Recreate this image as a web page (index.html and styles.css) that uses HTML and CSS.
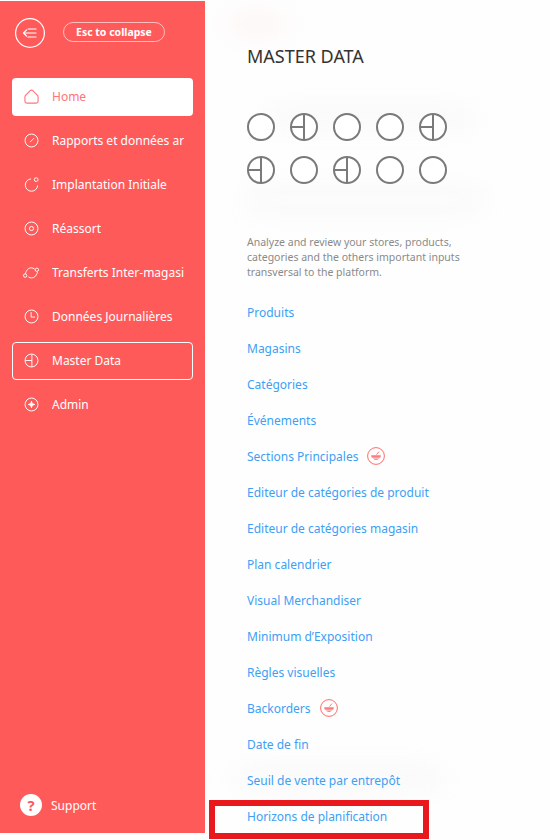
FILE: index.html
```html
<!DOCTYPE html>
<html lang="fr">
<head>
  <meta charset="UTF-8" />
  <meta name="viewport" content="width=device-width, initial-scale=1" />
  <title>Master Data</title>
  <link rel="stylesheet" href="styles.css">
</head>
<body>
  <div class="page">
    <aside class="sidebar">
      <div class="sidebar-top">
        <button class="collapse-btn" aria-label="Collapse">
          <svg width="30" height="30" viewBox="0 0 30 30" fill="none" stroke="#fff" stroke-width="1.2">
            <circle cx="15" cy="15" r="14.4"/>
            <path d="M8.5 15H21M8.5 15l3-3M8.5 15l3 3M13 11h8M13 19h8" stroke-linecap="round"/>
          </svg>
        </button>
        <span class="esc-pill">Esc to collapse</span>
      </div>

      <nav class="nav">
        <a class="nav-item active">
          <svg class="nav-icon" viewBox="0 0 16 16" fill="none" stroke="#ff7478" stroke-width="1.2"><path d="M3 15h10a2 2 0 0 0 2-2V8.200a2 2 0 0 0-.6-1.400L9.400 1.800a2 2 0 0 0-2.800 0L1.600 6.800A2 2 0 0 0 1 8.200V13a2 2 0 0 0 2 2z"/></svg>
          <span>Home</span>
        </a>
        <a class="nav-item">
          <svg class="nav-icon" viewBox="0 0 16 16" fill="none" stroke="#fff" stroke-width="1"><circle cx="8" cy="8" r="6.900"/><path d="M6.800 9.400l3.600-3.600" stroke-linecap="round"/></svg>
          <span>Rapports et données ar</span>
        </a>
        <a class="nav-item">
          <svg class="nav-icon" viewBox="0 0 16 16" fill="none" stroke="#fff" stroke-width="1"><path d="M7.500 2A6.600 6.600 0 1 0 14.600 9"/><circle cx="13" cy="2.800" r="2"/></svg>
          <span>Implantation Initiale</span>
        </a>
        <a class="nav-item">
          <svg class="nav-icon" viewBox="0 0 16 16" fill="none" stroke="#fff" stroke-width="1"><circle cx="8" cy="8" r="6.900"/><circle cx="8" cy="8" r="2.200"/></svg>
          <span>Réassort</span>
        </a>
        <a class="nav-item">
          <svg class="nav-icon wide" viewBox="0 0 16 16" fill="none" stroke="#fff" stroke-width="1"><path d="M1.500 9.500C2.500 5.500 4.800 3 7.600 3c1.400 0 2.600.5 3.800 1.400M14.500 7.500c-1 3.600-3.300 6.300-6.300 6.300-1.300 0-2.400-.4-3.500-1.100"/><circle cx="13.700" cy="5.100" r="1.800"/><circle cx="1.200" cy="11.300" r="1.800"/></svg>
          <span>Transferts Inter-magasi</span>
        </a>
        <a class="nav-item">
          <svg class="nav-icon" viewBox="0 0 16 16" fill="none" stroke="#fff" stroke-width="1"><circle cx="8" cy="8" r="6.900"/><path d="M7.600 3.800v4.800h3.800" stroke-linecap="round"/></svg>
          <span>Données Journalières</span>
        </a>
        <a class="nav-item outlined">
          <svg class="nav-icon" viewBox="0 0 16 16" fill="none" stroke="#fff" stroke-width="1"><circle cx="8" cy="8" r="6.900"/><path d="M8.400 1.300v13.400M1.300 8h7.100"/></svg>
          <span>Master Data</span>
        </a>
        <a class="nav-item">
          <svg class="nav-icon" viewBox="0 0 16 16" fill="none" stroke="#fff" stroke-width="1"><circle cx="8" cy="8" r="6.900"/><path d="M8 4.600c.4 2 1.400 3 3.400 3.400-2 .4-3 1.400-3.400 3.400-.4-2-1.400-3-3.400-3.400 2-.4 3-1.400 3.400-3.400z" fill="#fff"/></svg>
          <span>Admin</span>
        </a>
      </nav>

      <a class="support">
        <span class="support-icon">?</span>
        <span>Support</span>
      </a>
    </aside>

    <main class="content">
      <!-- fond flou derrière le panneau -->
      <div class="blur blur-a"></div>
      <div class="blur blur-b"></div>
      <div class="blur blur-c"></div>
      <div class="blur blur-d"></div>

      <h1 class="title">MASTER DATA</h1>

      <div class="circles">
        <span class="circle"></span>
        <span class="circle split"></span>
        <span class="circle"></span>
        <span class="circle"></span>
        <span class="circle split"></span>
        <span class="circle split"></span>
        <span class="circle"></span>
        <span class="circle split"></span>
        <span class="circle"></span>
        <span class="circle"></span>
      </div>

      <p class="description">Analyze and review your stores, products, categories and the others important inputs transversal to the platform.</p>

      <ul class="links">
        <li><a>Produits</a></li>
        <li><a>Magasins</a></li>
        <li><a>Catégories</a></li>
        <li><a>Événements</a></li>
        <li>
          <a>Sections Principales</a>
          <svg class="bowl" viewBox="0 0 18 18" fill="none"><circle cx="9" cy="9" r="8.400" stroke="#ff6b6b"/><path d="M4.200 8.200h9.600c0 1-.3 1.900-.8 2.600H5c-.5-.7-.8-1.600-.8-2.600zM5.800 11.600h6.400c-.8.800-1.900 1.300-3.200 1.300s-2.400-.5-3.200-1.300z" fill="#ff7a7a"/><path d="M9.500 7.600l2.500-3" stroke="#ff7a7a"/></svg>
        </li>
        <li><a>Editeur de catégories de produit</a></li>
        <li><a>Editeur de catégories magasin</a></li>
        <li><a>Plan calendrier</a></li>
        <li><a>Visual Merchandiser</a></li>
        <li><a>Minimum d’Exposition</a></li>
        <li><a>Règles visuelles</a></li>
        <li>
          <a>Backorders</a>
          <svg class="bowl" viewBox="0 0 18 18" fill="none"><circle cx="9" cy="9" r="8.400" stroke="#ff6b6b"/><path d="M4.200 8.200h9.600c0 1-.3 1.900-.8 2.600H5c-.5-.7-.8-1.600-.8-2.600zM5.800 11.600h6.400c-.8.800-1.900 1.300-3.200 1.300s-2.400-.5-3.200-1.300z" fill="#ff7a7a"/><path d="M9.500 7.600l2.500-3" stroke="#ff7a7a"/></svg>
        </li>
        <li><a>Date de fin</a></li>
        <li><a>Seuil de vente par entrepôt</a></li>
        <li><a>Horizons de planification</a></li>
      </ul>
    </main>
  </div>

  <!-- Cadre rouge d'annotation -->
  <div class="highlight"></div>
</body>
</html>
```

FILE: styles.css
```css
html, body {
  height: 100%;
}
body {
  margin: 0;
  background-color: #fff;
  font-family: "Noto Sans", Arial, sans-serif;
  overflow: hidden;
}
.page {
  display: flex;
  height: 840px;
}
/* Sidebar */
.sidebar {
  box-sizing: border-box;
  display: flex;
  flex-direction: column;
  flex: none;
  width: 205px;
  height: 832px;
  margin-top: 1px;
  padding: 17px 12px 17px;
  background-color: #ff5a5a;
  color: #fff;
}
.sidebar-top {
  display: flex;
  align-items: center;
  gap: 18px;
  padding-left: 3px;
}
.collapse-btn {
  display: block;
  padding: 0;
  border: none;
  background: none;
}
.collapse-btn svg {
  display: block;
}
.esc-pill {
  box-sizing: border-box;
  height: 20px;
  padding: 0 12px;
  margin-top: -2px;
  border: 1px solid rgba(255,255,255,0.6);
  border-radius: 10px;
  font-size: 10.5px;
  font-weight: 700;
  line-height: 18px;
  white-space: nowrap;
}
.nav {
  display: flex;
  flex-direction: column;
  gap: 6px;
  margin-top: 30px;
}
.nav-item {
  box-sizing: border-box;
  display: flex;
  align-items: center;
  gap: 13px;
  height: 38px;
  padding: 0 8px 1px 11px;
  border: 1px solid transparent;
  border-radius: 4px;
  font-size: 12px;
  white-space: nowrap;
  overflow: hidden;
}
.nav-item span {
  overflow: hidden;
}
.nav-item.active {
  background-color: #fff;
  color: #ff7478;
}
.nav-item.outlined {
  border-color: #fff;
}
.nav-icon {
  flex: none;
  width: 15px;
  height: 15px;
  overflow: visible;
}
.support {
  display: flex;
  align-items: center;
  gap: 9px;
  margin-top: auto;
  padding-left: 8px;
  font-size: 12px;
}
.support-icon {
  width: 22px;
  height: 22px;
  border-radius: 50%;
  background-color: #fff;
  color: #ff5a5a;
  font-size: 15px;
  font-weight: 700;
  line-height: 22px;
  text-align: center;
}
/* Contenu */
.content {
  position: relative;
  flex: 1;
  padding: 0 0 0 42px;
  background-color: #fefefe;
  overflow: hidden;
}
.title {
  position: relative;
  margin: 44px 0 0;
  font-size: 18px;
  font-weight: 400;
  line-height: 24px;
  color: #333;
}
.circles {
  position: relative;
  display: grid;
  grid-template-columns: repeat(5, 28px);
  gap: 15px;
  margin-top: 45px;
}
.circle {
  box-sizing: border-box;
  position: relative;
  width: 28px;
  height: 28px;
  border: 2px solid #7a7a7a;
  border-radius: 50%;
  background-color: #fff;
}
.circle.split::before {
  content: "";
  position: absolute;
  left: 11px;
  top: 0;
  bottom: 0;
  width: 2px;
  background-color: #7a7a7a;
}
.circle.split::after {
  content: "";
  position: absolute;
  left: 0;
  top: 11px;
  width: 11px;
  height: 2px;
  background-color: #7a7a7a;
}
.description {
  position: relative;
  width: 225px;
  margin: 51px 0 0;
  font-size: 10.5px;
  line-height: 15px;
  color: #8a8a8a;
}
.links {
  position: relative;
  margin: 14px 0 0;
  padding: 0;
  list-style: none;
}
.links li {
  display: flex;
  align-items: center;
  gap: 9px;
  height: 36px;
  font-size: 12px;
  color: #3d9ff5;
  white-space: nowrap;
}
.bowl {
  width: 18px;
  height: 18px;
}
/* Taches floues */
.blur {
  position: absolute;
  border-radius: 30px;
  filter: blur(14px);
}
.blur-a {
  left: 22px;
  top: 16px;
  width: 60px;
  height: 16px;
  background-color: #fff2f2;
}
.blur-b {
  left: 60px;
  top: 110px;
  width: 210px;
  height: 16px;
  background-color: #f7f7f7;
}
.blur-c {
  left: 40px;
  top: 190px;
  width: 240px;
  height: 20px;
  background-color: #f8f8f8;
}
.blur-d {
  left: 30px;
  top: 770px;
  width: 210px;
  height: 16px;
  background-color: #f7f7f7;
}
/* Annotation */
.highlight {
  box-sizing: border-box;
  position: absolute;
  left: 209px;
  top: 800px;
  width: 220px;
  height: 39px;
  border: 6px solid #e8181c;
}
```
